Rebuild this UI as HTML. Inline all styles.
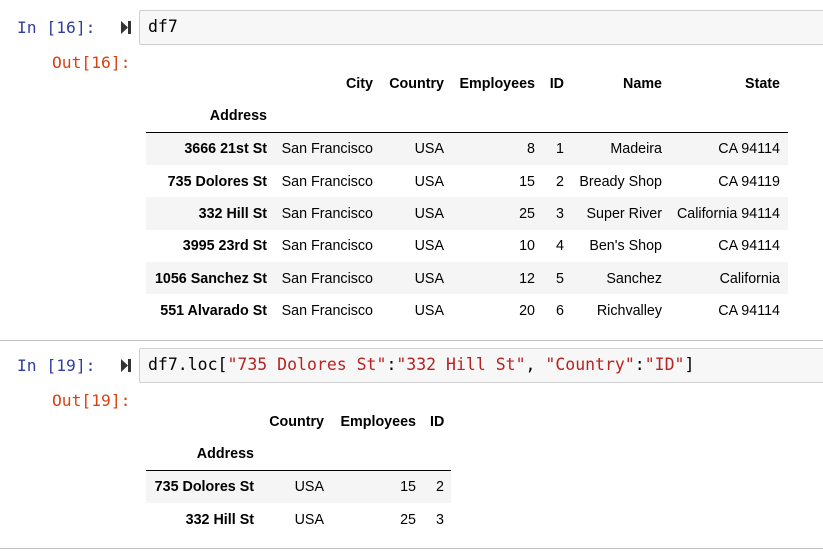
<!DOCTYPE html>
<html><head><style>
body{margin:0;width:823px;height:555px;background:#fff;position:relative;overflow:hidden;font-family:"Liberation Sans",sans-serif;}
.mono{font-family:"DejaVu Sans Mono","Liberation Mono",monospace;}
.pin{position:absolute;left:17px;font-size:16.3px;color:#303f9f;}
.pout{position:absolute;left:52px;font-size:16.3px;color:#d84315;}
.box{position:absolute;left:139px;width:700px;height:33px;background:#f7f7f7;border:1px solid #cfcfcf;border-radius:2px;}
.code{position:absolute;left:8px;top:6px;font-size:16.5px;color:#000;white-space:pre;}
.s{color:#ba2121}
.run{position:absolute;left:121px;width:10px;height:13px;}
.sep{position:absolute;left:0;width:823px;height:1px;background:#c0c0c0;}
table{position:absolute;left:146px;border-collapse:collapse;table-layout:fixed;font-size:14.3px;color:#000;}
td,th{padding:0 7px;text-align:right;height:32px;white-space:nowrap;line-height:16px;}
th{font-weight:bold;}
thead tr:last-child th{border-bottom:1px solid #000;}
tbody tr:nth-child(odd){background:#f5f5f5;}
tbody tr{height:32.4px;}
tbody td,tbody th{height:auto;padding-top:1px;padding-bottom:0;}
</style></head><body>
<div class="pin mono" style="top:18px">In [16]:</div>
<svg class="run" style="top:21px" viewBox="0 0 10 13"><path d="M0 0L7 6.5L0 13Z" fill="#333"/><rect x="7" y="0" width="3" height="13" fill="#333"/></svg>
<div class="box" style="top:10px"><div class="code mono">df7</div></div>
<div class="pout mono" style="top:53px">Out[16]:</div>
<table style="top:68px;width:642px">
<colgroup><col style="width:128px"><col style="width:106px"><col style="width:71px"><col style="width:91px"><col style="width:29px"><col style="width:98px"><col style="width:119px"></colgroup>
<thead><tr><th></th><th>City</th><th>Country</th><th>Employees</th><th>ID</th><th>Name</th><th style="padding-right:8px">State</th></tr>
<tr><th>Address</th><th></th><th></th><th></th><th></th><th></th><th></th></tr></thead>
<tbody>
<tr><th>3666 21st St</th><td>San Francisco</td><td>USA</td><td>8</td><td>1</td><td>Madeira</td><td style="padding-right:8px">CA 94114</td></tr>
<tr><th>735 Dolores St</th><td>San Francisco</td><td>USA</td><td>15</td><td>2</td><td>Bready Shop</td><td style="padding-right:8px">CA 94119</td></tr>
<tr><th>332 Hill St</th><td>San Francisco</td><td>USA</td><td>25</td><td>3</td><td>Super River</td><td style="padding-right:8px">California 94114</td></tr>
<tr><th>3995 23rd St</th><td>San Francisco</td><td>USA</td><td>10</td><td>4</td><td>Ben's Shop</td><td style="padding-right:8px">CA 94114</td></tr>
<tr><th>1056 Sanchez St</th><td>San Francisco</td><td>USA</td><td>12</td><td>5</td><td>Sanchez</td><td style="padding-right:8px">California</td></tr>
<tr><th>551 Alvarado St</th><td>San Francisco</td><td>USA</td><td>20</td><td>6</td><td>Richvalley</td><td style="padding-right:8px">CA 94114</td></tr>
</tbody></table>
<div class="sep" style="top:340px"></div>
<div class="pin mono" style="top:356px">In [19]:</div>
<svg class="run" style="top:359px" viewBox="0 0 10 13"><path d="M0 0L7 6.5L0 13Z" fill="#333"/><rect x="7" y="0" width="3" height="13" fill="#333"/></svg>
<div class="box" style="top:348px"><div class="code mono">df7.loc[<span class="s">"735 Dolores St"</span>:<span class="s">"332 Hill St"</span>, <span class="s">"Country"</span>:<span class="s">"ID"</span>]</div></div>
<div class="pout mono" style="top:391px">Out[19]:</div>
<table style="top:406px;width:305px">
<colgroup><col style="width:115px"><col style="width:70px"><col style="width:92px"><col style="width:28px"></colgroup>
<thead><tr><th></th><th>Country</th><th>Employees</th><th>ID</th></tr>
<tr><th>Address</th><th></th><th></th><th></th></tr></thead>
<tbody>
<tr><th>735 Dolores St</th><td>USA</td><td>15</td><td>2</td></tr>
<tr><th>332 Hill St</th><td>USA</td><td>25</td><td>3</td></tr>
</tbody></table>
<div class="sep" style="top:548px"></div>
</body></html>
